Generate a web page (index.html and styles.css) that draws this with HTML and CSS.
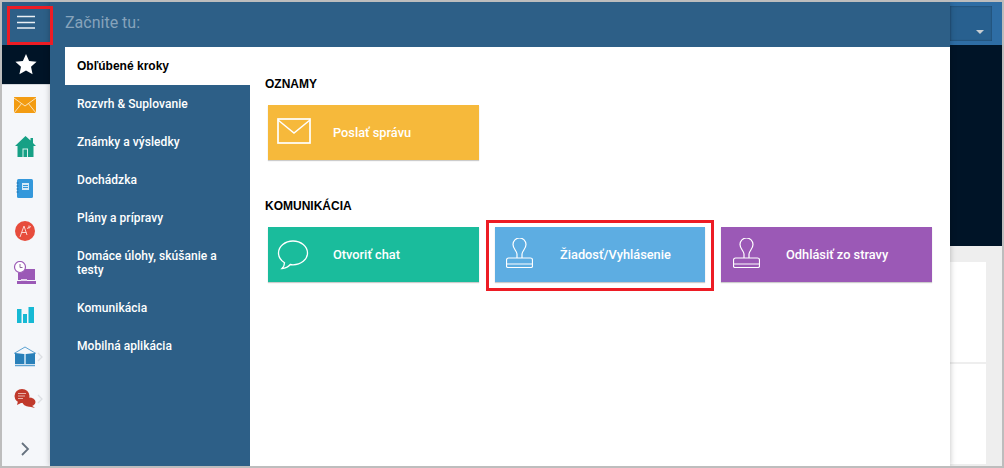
FILE: index.html
```html
<!DOCTYPE html>
<html lang="sk">
<head>
<meta charset="utf-8">
<title>Začnite tu</title>
<link rel="stylesheet" href="styles.css">
</head>
<body>
<div class="app">
  <aside class="rail">
    <div class="rail-top">
      <svg class="burger" width="18" height="14" viewBox="0 0 18 14"><path d="M0 1.500h18M0 7.500h18M0 13h18" stroke="#fff" stroke-width="1.500" opacity=".9"/></svg>
    </div>
    <div class="rail-star">
      <svg width="22" height="21" viewBox="0 0 24 23"><path d="M12 0l3.400 7.600 8.200.9-6.100 5.500 1.700 8.100L12 18l-7.200 4.100 1.700-8.100L.4 8.500l8.200-.9z" fill="#fff"/></svg>
    </div>
    <div class="rail-icons">
      <div class="ri-row"><svg width="24" height="24" viewBox="0 0 24 24"><rect x="1" y="4" width="22" height="16" fill="#f39c12"/><path d="M1 5l11 8 11-8M1 20l8-10M23 20l-8-10" fill="none" stroke="#fbe3b8" stroke-width="1"/></svg></div>
      <div class="ri-row"><svg width="24" height="24" viewBox="0 0 24 24"><path d="M12.500 1L2 11h2.500v11h16V11H23l-3-3V3h-2.500v2.500z" fill="#16a085"/><rect x="9.500" y="13.500" width="5.500" height="8.500" fill="#d7f2ec"/><rect x="10.500" y="14.500" width="3.500" height="7.500" fill="#16a085"/></svg></div>
      <div class="ri-row"><svg width="24" height="24" viewBox="0 0 24 24"><rect x="4" y="2" width="16" height="19" rx="1.500" fill="#3498db"/><rect x="9" y="6" width="7" height="7" fill="#d5e9f7"/><path d="M10 8.500h5M10 10.500h5" stroke="#3498db"/><path d="M3.500 6h2M3.500 9h2M3.500 12h2M3.500 15h2" stroke="#1f6fa8"/></svg></div>
      <div class="ri-row"><svg width="24" height="24" viewBox="0 0 24 24"><circle cx="12" cy="12" r="10" fill="#e74c3c"/><path d="M7 18l4-11 3 9M8.500 13.500h5M14 9.500l4-2M16 6.500v3" fill="none" stroke="#fbd5d0" stroke-width="1"/></svg></div>
      <div class="ri-row"><svg width="24" height="24" viewBox="0 0 24 24"><rect x="5" y="8" width="17" height="11" fill="#9b59b6"/><rect x="4" y="20" width="19" height="3" fill="#9b59b6"/><rect x="8" y="18" width="6" height="2" fill="#e6d5ee"/><circle cx="7" cy="6" r="5.500" fill="#fff" stroke="#9b59b6" stroke-width="1.200"/><path d="M7 3v3.500h2.500" fill="none" stroke="#8b6a9a"/></svg></div>
      <div class="ri-row"><svg width="24" height="24" viewBox="0 0 24 24"><path d="M4 6h4.500v14H4zM10 11h4v9h-4zM15.500 4H21v16h-5.500z" fill="#16b9d4"/></svg></div>
      <div class="ri-row">
        <svg width="24" height="24" viewBox="0 0 24 24"><path d="M1 8.500l11-6.500 11 6.500" fill="none" stroke="#5da3d2" stroke-width="1"/><path d="M2 8l9 1v10H2zM13 9l9-1v11h-9z" fill="#2980b9"/><path d="M11 9h2v10h-2z" fill="#a8cfe8"/><path d="M2 20.500h20" fill="none" stroke="#5da3d2" stroke-width="1.500"/></svg>
        <svg class="chev" width="6" height="10" viewBox="0 0 6 10"><path d="M1 1l4 4-4 4" fill="none" stroke="#dcdfe3" stroke-width="1.300"/></svg>
      </div>
      <div class="ri-row">
        <svg width="24" height="24" viewBox="0 0 24 24"><ellipse cx="16" cy="15" rx="6.500" ry="4.500" fill="#c0392b"/><path d="M18 18l4 3-8-2z" fill="#c0392b"/><ellipse cx="9" cy="9" rx="7.500" ry="7" fill="#c0392b"/><path d="M5 14l-1 4 6-3z" fill="#c0392b"/><path d="M5 6.500h8M5 9h7M5 11.500h5" stroke="#e8b0a8"/></svg>
        <svg class="chev" width="6" height="10" viewBox="0 0 6 10"><path d="M1 1l4 4-4 4" fill="none" stroke="#dcdfe3" stroke-width="1.300"/></svg>
      </div>
    </div>
    <div class="rail-foot">
      <svg width="9" height="14" viewBox="0 0 9 14"><path d="M1 1l6 6-6 6" fill="none" stroke="#66727f" stroke-width="1.800"/></svg>
    </div>
  </aside>

  <div class="panel">
    <header class="panel-head">Začnite tu:</header>
    <div class="panel-body">
      <nav class="nav">
        <a class="nav-item active">Obľúbené kroky</a>
        <a class="nav-item">Rozvrh &amp; Suplovanie</a>
        <a class="nav-item">Známky a výsledky</a>
        <a class="nav-item">Dochádzka</a>
        <a class="nav-item">Plány a prípravy</a>
        <a class="nav-item tall">Domáce úlohy, skúšanie a testy</a>
        <a class="nav-item">Komunikácia</a>
        <a class="nav-item">Mobilná aplikácia</a>
      </nav>
      <main class="content">
        <h2 class="sec-title">OZNAMY</h2>
        <div class="cards">
          <div class="card yellow">
            <svg class="card-icon" width="34" height="26" viewBox="0 0 34 26"><rect x="1" y="1" width="32" height="24" fill="none" stroke="#fff" stroke-width="1.700"/><path d="M1 2l16 13L33 2" fill="none" stroke="#fff" stroke-width="1.500"/></svg>
            <span>Poslať správu</span>
          </div>
        </div>
        <h2 class="sec-title second">KOMUNIKÁCIA</h2>
        <div class="cards">
          <div class="card green">
            <svg class="card-icon" width="32" height="30" viewBox="0 0 32 30"><path d="M16 1C8 1 1.500 6.500 1.500 13c0 4 2.500 7.500 6 9.700 0 2-1 4.300-2.500 5.800 3.500-.3 6.500-2 8.300-4 .9.200 1.800.300 2.700.300 8 0 14.500-5.300 14.500-11.800S24 1 16 1z" fill="none" stroke="#fff" stroke-width="1.300"/></svg>
            <span>Otvoriť chat</span>
          </div>
          <div class="card blue">
            <svg class="card-icon stamp" width="27" height="30" viewBox="0 0 27 30"><path d="M11 20v-4c0-3-4-5-4-9.500a6.500 6.500 0 0 1 13 0c0 4.500-4 6.500-4 9.500v4M2.500 20h22a2 2 0 0 1 2 2v4H.5v-4a2 2 0 0 1 2-2zM.5 26v2a1.500 1.500 0 0 0 1.500 1.500h23a1.500 1.500 0 0 0 1.500-1.500v-2" fill="none" stroke="#fff" stroke-width="1.200"/></svg>
            <span>Žiadosť/Vyhlásenie</span>
          </div>
          <div class="card purple">
            <svg class="card-icon stamp" width="27" height="30" viewBox="0 0 27 30"><path d="M11 20v-4c0-3-4-5-4-9.500a6.500 6.500 0 0 1 13 0c0 4.500-4 6.500-4 9.500v4M2.500 20h22a2 2 0 0 1 2 2v4H.5v-4a2 2 0 0 1 2-2zM.5 26v2a1.500 1.500 0 0 0 1.500 1.500h23a1.500 1.500 0 0 0 1.500-1.500v-2" fill="none" stroke="#fff" stroke-width="1.200"/></svg>
            <span>Odhlásiť zo stravy</span>
          </div>
        </div>
      </main>
    </div>
  </div>

  <div class="backdrop">
    <div class="back-head"><div class="back-select"><i class="caret"></i></div></div>
    <div class="back-dark"></div>
    <div class="back-page">
      <div class="back-card"></div>
      <div class="back-card"></div>
    </div>
  </div>

  <div class="mark mark-menu"></div>
  <div class="mark mark-card"></div>
</div>
</body>
</html>
```

FILE: styles.css
```css
* { box-sizing: border-box; }
html, body { margin: 0; padding: 0; }
body { width: 1004px; height: 468px; overflow: hidden; font-family: Roboto, "Liberation Sans", Arial, sans-serif; }
.app { position: relative; display: flex; width: 1004px; height: 468px; border: 2px solid #bdbdbd; background: #eee; overflow: hidden; }

.rail { width: 48px; flex: none; display: flex; flex-direction: column; background: #f5f7fa; }
.rail-top { height: 43px; background: #2d5f87; display: flex; align-items: center; justify-content: center; padding-bottom: 3px; }
.rail-star { height: 40px; background: #001427; display: flex; align-items: center; justify-content: center; border-bottom: 1px solid #d5d8dc; }
.rail-icons { display: flex; flex-direction: column; margin-top: -1px; padding-left: 11px; flex: 1; }
.ri-row { display: flex; align-items: center; height: 42px; flex: none; }
.chev { flex: none; }
.rail-foot { height: 40px; display: flex; align-items: center; padding: 6px 0 0 19px; }

.panel { width: 900px; flex: none; display: flex; flex-direction: column; background: #fff; box-shadow: 0 0 6px rgba(0,0,0,.25); position: relative; z-index: 1; }
.panel-head { height: 45px; padding: 0 0 3px 15px; background: #2d5f87; color: #86a3bb; font-size: 16px; line-height: 42px; }
.panel-body { flex: 1; display: flex; min-height: 0; }

.nav { width: 200px; flex: none; background: #2d5f87; padding-left: 15px; display: flex; flex-direction: column; }
.nav-item { display: flex; align-items: center; height: 38px; padding: 0 12px; color: #fff; font-size: 12px; font-weight: 500; line-height: 14px; letter-spacing: .05px; }
.nav-item.tall { height: 52px; }
.nav-item.active { background: #fff; color: #000; font-family: "Liberation Sans", Arial, sans-serif; font-weight: 700; letter-spacing: 0; }

.content { flex: 1; padding: 30px 18px 0 15px; }
.sec-title { margin: 0; font-size: 12px; font-weight: 700; line-height: 14px; color: #000; font-family: "Liberation Sans", Arial, sans-serif; }
.sec-title.second { margin-top: 39px; }
.cards { display: flex; gap: 16px; margin-top: 14px; padding-left: 3px; }
.card { width: 211px; height: 55px; display: flex; align-items: center; color: #fff; font-size: 12.8px; font-weight: 500; position: relative; padding-left: 65px; box-shadow: 0 1px 1px rgba(0,0,0,.2); }
.card-icon { position: absolute; left: 9px; top: 13px; }
.card-icon.stamp { left: 11px; top: 11px; }
.purple .card-icon.stamp { left: 12px; }
.yellow { background: #f6b93b; }
.green { background: #1abc9c; }
.blue { background: #5dade2; width: 210px; }
.purple { background: #9b59b6; }

.backdrop { flex: 1; display: flex; flex-direction: column; min-width: 0; }
.back-head { height: 43px; background: #2e6da4; padding: 4px 10px 4px 0; }
.back-select { height: 35px; background: #28608f; box-shadow: inset 0 0 2px rgba(0,0,0,.4); position: relative; }
.caret { position: absolute; right: 8px; bottom: 7px; width: 0; height: 0; border: 4px solid transparent; border-top: 4px solid #c9ced2; border-bottom: 0; }
.back-dark { height: 201px; background: #001427; }
.back-page { flex: 1; padding: 16px 16px 0 0; display: flex; flex-direction: column; gap: 2px; background: #eee; }
.back-card { height: 100px; background: #fff; }

.mark { position: absolute; border: 3px solid #ed1c24; z-index: 2; pointer-events: none; }
.mark-menu { left: 5px; top: 4px; width: 46px; height: 39px; }
.mark-card { left: 484px; top: 218px; width: 228px; height: 71px; }
```
